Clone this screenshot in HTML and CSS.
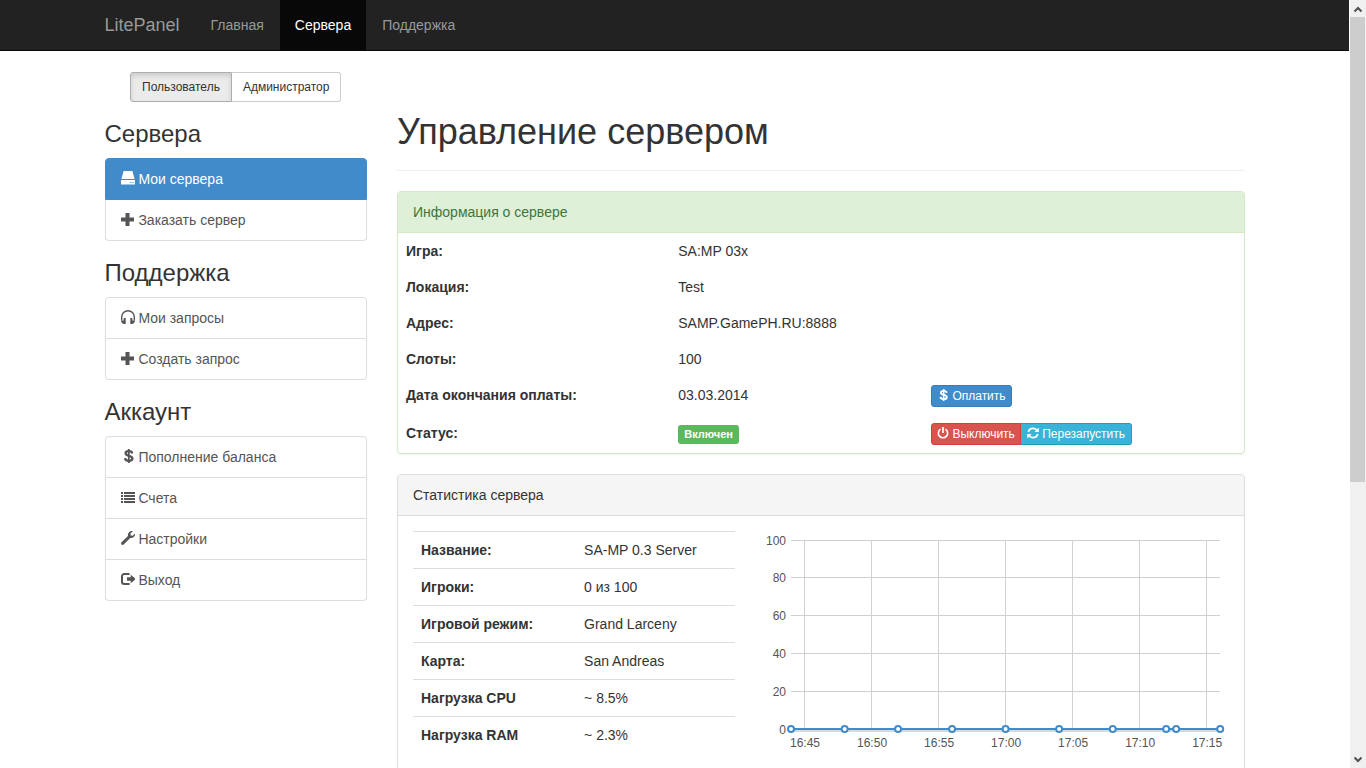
FILE: index.html
```html
<!DOCTYPE html>
<html lang="ru">
<head>
<meta charset="utf-8">
<title>LitePanel</title>
<link rel="stylesheet" href="styles.css">
</head>
<body>
<svg class="sprite" aria-hidden="true">
  <symbol id="i-hdd" viewBox="0 0 14 14"><path d="M2.6 0h8.8L13.6 8H.4zM0 9h14v4.6H0zM9.2 11v1h1.2v-1zM11.4 11v1h1.2v-1z" fill-rule="evenodd"/></symbol>
  <symbol id="i-plus" viewBox="0 0 14 14"><path d="M4.500 1h4v4.500H13v4H8.500V14h-4V9.500H0v-4h4.500z"/></symbol>
  <symbol id="i-headphones" viewBox="0 0 14 14"><path d="M.7 10.500V7a6.300 6.300 0 0 1 12.600 0v3.500" fill="none" stroke="currentColor" stroke-width="1.400"/><path d="M2.700 8h2v6h-2C1.300 13.500 0 12.500 0 10.500h2.700zM9.300 8h2v2.500H14c0 2-1.300 3-2.700 3.500h-2z"/></symbol>
  <symbol id="i-usd" viewBox="0 0 14 14"><path d="M11.200 4.500C11 2.900 9.700 2.200 7.800 2.200S4.600 2.900 4.600 4.300c0 3.400 6.800 1.800 6.800 5.200 0 1.500-1.500 2.300-3.600 2.300S4.200 11 4 9.200" fill="none" stroke="currentColor" stroke-width="2.300"/><path d="M6.900 0h1.800v14H6.900z"/></symbol>
  <symbol id="i-list" viewBox="0 0 14 14"><path d="M0 1h2v2H0zM3 1h11v2H3zM0 4h2v2H0zM3 4h11v2H3zM0 7h2v2H0zM3 7h11v2H3zM0 10h2v2H0zM3 10h11v2H3z" transform="translate(0 1)"/></symbol>
  <symbol id="i-wrench" viewBox="0 0 14 14"><path d="M11.800.2 9.300 2.700l.5 1.700 1.800.4L14 2.500c.3 2.900-2 5-4.800 4.400L2.700 13.500c-.6.6-1.700.6-2.200 0s-.6-1.600 0-2.200L7 5C6.300 2.300 8.700-.4 11.800.2z"/></symbol>
  <symbol id="i-logout" viewBox="0 0 14 14"><path d="M8.600 2H3.200A2.200 2.200 0 0 0 1 4.200v5.600A2.200 2.200 0 0 0 3.200 12h5.400" fill="none" stroke="currentColor" stroke-width="2"/><path d="M6 5.200h3.700V2.800L14.800 7l-5.100 4.200V8.800H6z"/></symbol>
  <symbol id="i-off" viewBox="0 0 14 14"><path d="M4.300 2.500a5.400 5.400 0 1 0 5.400 0" fill="none" stroke="currentColor" stroke-width="1.900"/><path d="M6 0h2v7H6z"/></symbol>
  <symbol id="i-refresh" viewBox="0 0 14 14"><path d="M1.500 5.800C2.300 3 4.400 1.500 7 1.500c1.700 0 3 .6 4.200 1.800M12.500 8.200C11.700 11 9.600 12.500 7 12.500c-1.700 0-3-.6-4.200-1.800" fill="none" stroke="currentColor" stroke-width="2"/><path d="M13.800.5v5.300H8.500zM.2 13.500V8.200h5.300z"/></symbol>
</svg>

<div class="page">
  <header class="navbar">
    <nav class="container navbar-inner">
      <a class="brand" href="#">LitePanel</a>
      <a class="nav-link" href="#">Главная</a>
      <a class="nav-link active" href="#">Сервера</a>
      <a class="nav-link" href="#">Поддержка</a>
    </nav>
  </header>

  <div class="container content">
    <aside class="sidebar">
      <div class="role-switch">
        <button type="button" class="btn-role active">Пользователь</button>
        <button type="button" class="btn-role">Администратор</button>
      </div>

      <h3>Сервера</h3>
      <nav class="list-group">
        <a class="list-item active" href="#"><svg class="icon"><use href="#i-hdd"/></svg> Мои сервера</a>
        <a class="list-item" href="#"><svg class="icon"><use href="#i-plus"/></svg> Заказать сервер</a>
      </nav>

      <h3>Поддержка</h3>
      <nav class="list-group">
        <a class="list-item" href="#"><svg class="icon"><use href="#i-headphones"/></svg> Мои запросы</a>
        <a class="list-item" href="#"><svg class="icon"><use href="#i-plus"/></svg> Создать запрос</a>
      </nav>

      <h3>Аккаунт</h3>
      <nav class="list-group">
        <a class="list-item" href="#"><svg class="icon"><use href="#i-usd"/></svg> Пополнение баланса</a>
        <a class="list-item" href="#"><svg class="icon"><use href="#i-list"/></svg> Счета</a>
        <a class="list-item" href="#"><svg class="icon"><use href="#i-wrench"/></svg> Настройки</a>
        <a class="list-item" href="#"><svg class="icon"><use href="#i-logout"/></svg> Выход</a>
      </nav>
    </aside>

    <main class="main">
      <div class="page-header"><h1>Управление сервером</h1></div>

      <section class="panel panel-success">
        <div class="panel-heading">Информация о сервере</div>
        <table class="info-table">
          <tbody>
            <tr><th scope="row">Игра:</th><td>SA:MP 03x</td><td></td></tr>
            <tr><th scope="row">Локация:</th><td>Test</td><td></td></tr>
            <tr><th scope="row">Адрес:</th><td>SAMP.GamePH.RU:8888</td><td></td></tr>
            <tr><th scope="row">Слоты:</th><td>100</td><td></td></tr>
            <tr><th scope="row">Дата окончания оплаты:</th><td>03.03.2014</td>
              <td><div class="btn-group"><button type="button" class="btn btn-primary"><svg class="icon"><use href="#i-usd"/></svg> Оплатить</button></div></td></tr>
            <tr><th scope="row">Статус:</th><td><span class="label">Включен</span></td>
              <td><div class="btn-group"><button type="button" class="btn btn-danger"><svg class="icon"><use href="#i-off"/></svg> Выключить</button><button type="button" class="btn btn-info"><svg class="icon"><use href="#i-refresh"/></svg> Перезапустить</button></div></td></tr>
          </tbody>
        </table>
      </section>

      <section class="panel">
        <div class="panel-heading">Статистика сервера</div>
        <div class="panel-body">
          <div class="stats">
            <table class="stats-table">
              <tbody>
                <tr><th scope="row">Название:</th><td>SA-MP 0.3 Server</td></tr>
                <tr><th scope="row">Игроки:</th><td>0 из 100</td></tr>
                <tr><th scope="row">Игровой режим:</th><td>Grand Larceny</td></tr>
                <tr><th scope="row">Карта:</th><td>San Andreas</td></tr>
                <tr><th scope="row">Нагрузка CPU</th><td>~ 8.5%</td></tr>
                <tr><th scope="row">Нагрузка RAM</th><td>~ 2.3%</td></tr>
              </tbody>
            </table>
          </div>
          <div class="chart-col">
            <svg class="chart" viewBox="0 0 463 240" role="img" aria-label="Игроки">
              <path class="grid" d="M26 9.500H455M26 46.500H455M26 84.500H455M26 122.500H455M26 160.500H455M39.500 9V198M106.500 9V198M173.500 9V198M240.500 9V198M307.500 9V198M374.500 9V198M441.500 9V198"/>
              <g class="axis axis-y">
                <text x="21" y="14">100</text><text x="21" y="51">80</text><text x="21" y="89">60</text><text x="21" y="127">40</text><text x="21" y="165">20</text><text x="21" y="203">0</text>
              </g>
              <g class="axis axis-x">
                <text x="40" y="216">16:45</text><text x="107" y="216">16:50</text><text x="174" y="216">16:55</text><text x="241" y="216">17:00</text><text x="308" y="216">17:05</text><text x="375" y="216">17:10</text><text x="442" y="216">17:15</text>
              </g>
              <path class="line-shadow" d="M26 200H455"/>
              <path class="line" d="M26 198H455"/>
              <g class="points">
                <circle cx="26" cy="198" r="3"/><circle cx="79.600" cy="198" r="3"/><circle cx="133" cy="198" r="3"/><circle cx="187" cy="198" r="3"/><circle cx="240.500" cy="198" r="3"/><circle cx="294" cy="198" r="3"/><circle cx="347.600" cy="198" r="3"/><circle cx="401" cy="198" r="3"/><circle cx="411" cy="198" r="3"/><circle cx="455" cy="198" r="3"/>
              </g>
            </svg>
          </div>
        </div>
      </section>
    </main>
  </div>
</div>

<div class="scrollbar" aria-hidden="true">
  <svg class="arrow" viewBox="0 0 16 17"><path d="M4.500 11.500 8 8l3.500 3.500" /></svg>
  <div class="track"><div class="thumb"></div></div>
  <svg class="arrow" viewBox="0 0 16 17"><path d="M4.500 6.500 8 10l3.500-3.500"/></svg>
</div>
</body>
</html>
```
FILE: styles.css
```css
* { box-sizing: border-box; }

body {
  margin: 0;
  display: flex;
  height: 100vh;
  overflow: hidden;
  background: #fff;
  color: #333;
  font: 14px/20px "Liberation Sans", Arial, sans-serif;
}

a { text-decoration: none; }
button { font-family: inherit; cursor: pointer; }
.sprite { display: none; }

.page { flex: 1; min-width: 0; overflow: hidden; }

.container { max-width: 1170px; margin: 0 auto; }

/* Top bar */
.navbar { background: #222; border-bottom: 1px solid #080808; }
.navbar-inner { display: flex; gap: 1px; }
.brand { padding: 15px; color: #999; font-size: 18px; }
.nav-link { padding: 15px; color: #999; }
.nav-link.active { background: #080808; color: #fff; }

/* Columns */
.content { display: flex; padding-top: 21px; }
.sidebar { width: 25%; padding: 0 15px; }
.main { width: 75%; padding: 0 15px; }

/* Sidebar */
.role-switch { display: flex; justify-content: center; }
.btn-role {
  padding: 5px 11px;
  border: 1px solid #ccc;
  border-radius: 0 3px 3px 0;
  background: #fff;
  color: #333;
  font-size: 12px;
  line-height: 18px;
}
.btn-role + .btn-role { border-left: 0; }
.btn-role.active {
  border-color: #adadad;
  border-radius: 3px 0 0 3px;
  background: #ebebeb;
  box-shadow: inset 0 3px 5px rgba(0, 0, 0, .125);
}

h3 { margin: 19px 0 11px; font-size: 24px; font-weight: 400; line-height: 26px; }

.list-group { margin-bottom: 19px; }
.list-item {
  display: block;
  padding: 10px 15px;
  border: 1px solid #ddd;
  color: #555;
}
.list-item + .list-item { border-top: 0; }
.list-item:first-child { border-radius: 4px 4px 0 0; }
.list-item:last-child { border-radius: 0 0 4px 4px; }
.list-item.active { background: #428bca; border-color: #428bca; color: #fff; }

.icon { width: 1em; height: 1em; fill: currentColor; vertical-align: -1px; overflow: visible; }

/* Main column */
.page-header { margin: 40px 0 20px; padding-bottom: 9px; border-bottom: 1px solid #eee; }
h1 { margin: 0 0 9px; font-size: 36px; font-weight: 400; line-height: 40px; }

.panel {
  margin-bottom: 20px;
  border: 1px solid #ddd;
  border-radius: 4px;
  box-shadow: 0 1px 1px rgba(0, 0, 0, .05);
}
.panel-heading {
  padding: 10px 15px;
  border-bottom: 1px solid #ddd;
  border-radius: 3px 3px 0 0;
  background: #f5f5f5;
}
.panel-success, .panel-success .panel-heading { border-color: #d6e9c6; }
.panel-success .panel-heading { background: #dff0d8; color: #3c763d; }

table { width: 100%; border-collapse: collapse; table-layout: fixed; }
th, td { padding: 8px; text-align: left; vertical-align: top; }
.info-table th { width: 32.2%; }
.info-table td:nth-child(2) { width: 29.9%; }

.label {
  display: inline-block;
  padding: 3px 6px;
  border-radius: 3px;
  background: #5cb85c;
  color: #fff;
  font-size: 11px;
  font-weight: 700;
  line-height: 13px;
  vertical-align: middle;
}

.btn-group { display: flex; }
.btn {
  padding: 1px 5px;
  border: 1px solid;
  border-radius: 3px;
  color: #fff;
  font-size: 12px;
  line-height: 18px;
  white-space: nowrap;
}
.btn:not(:last-child) { border-radius: 3px 0 0 3px; }
.btn + .btn { border-left: 0; border-radius: 0 3px 3px 0; padding: 1px 6px; }
.btn-primary { background: #428bca; border-color: #357ebd; }
.btn-danger { background: #d9534f; border-color: #d43f3a; }
.btn-info { background: #39b3d7; border-color: #269abc; }

.panel-body { display: flex; padding: 15px 0; }
.stats { width: 41.667%; padding: 0 15px; }
.chart-col { width: 58.333%; padding: 0 15px; }
.stats-table th, .stats-table td { border-top: 1px solid #ddd; }
.stats-table th { width: 50.6%; padding-right: 0; }

/* Chart */
.chart { display: block; width: 100%; overflow: visible; }
.grid { fill: none; stroke: #000; stroke-opacity: .18; shape-rendering: crispEdges; }
.axis { fill: #545454; font-size: 12px; }
.axis-y { text-anchor: end; }
.axis-x { text-anchor: middle; }
.line { stroke: #428bca; stroke-width: 2; }
.line-shadow { stroke: #000; stroke-opacity: .15; stroke-width: 2; }
.points { fill: #fff; stroke: #428bca; stroke-width: 2; }

/* Window scrollbar */
.scrollbar {
  display: flex;
  flex-direction: column;
  width: 17px;
  padding-left: 1px;
  background: #f0f0f0 content-box;
}
.arrow { width: 16px; height: 17px; fill: none; stroke: #505050; stroke-width: 2; }
.track { flex: 1; padding-right: 1px; }
.thumb { height: 63.4%; background: #cdcdcd; }
```
